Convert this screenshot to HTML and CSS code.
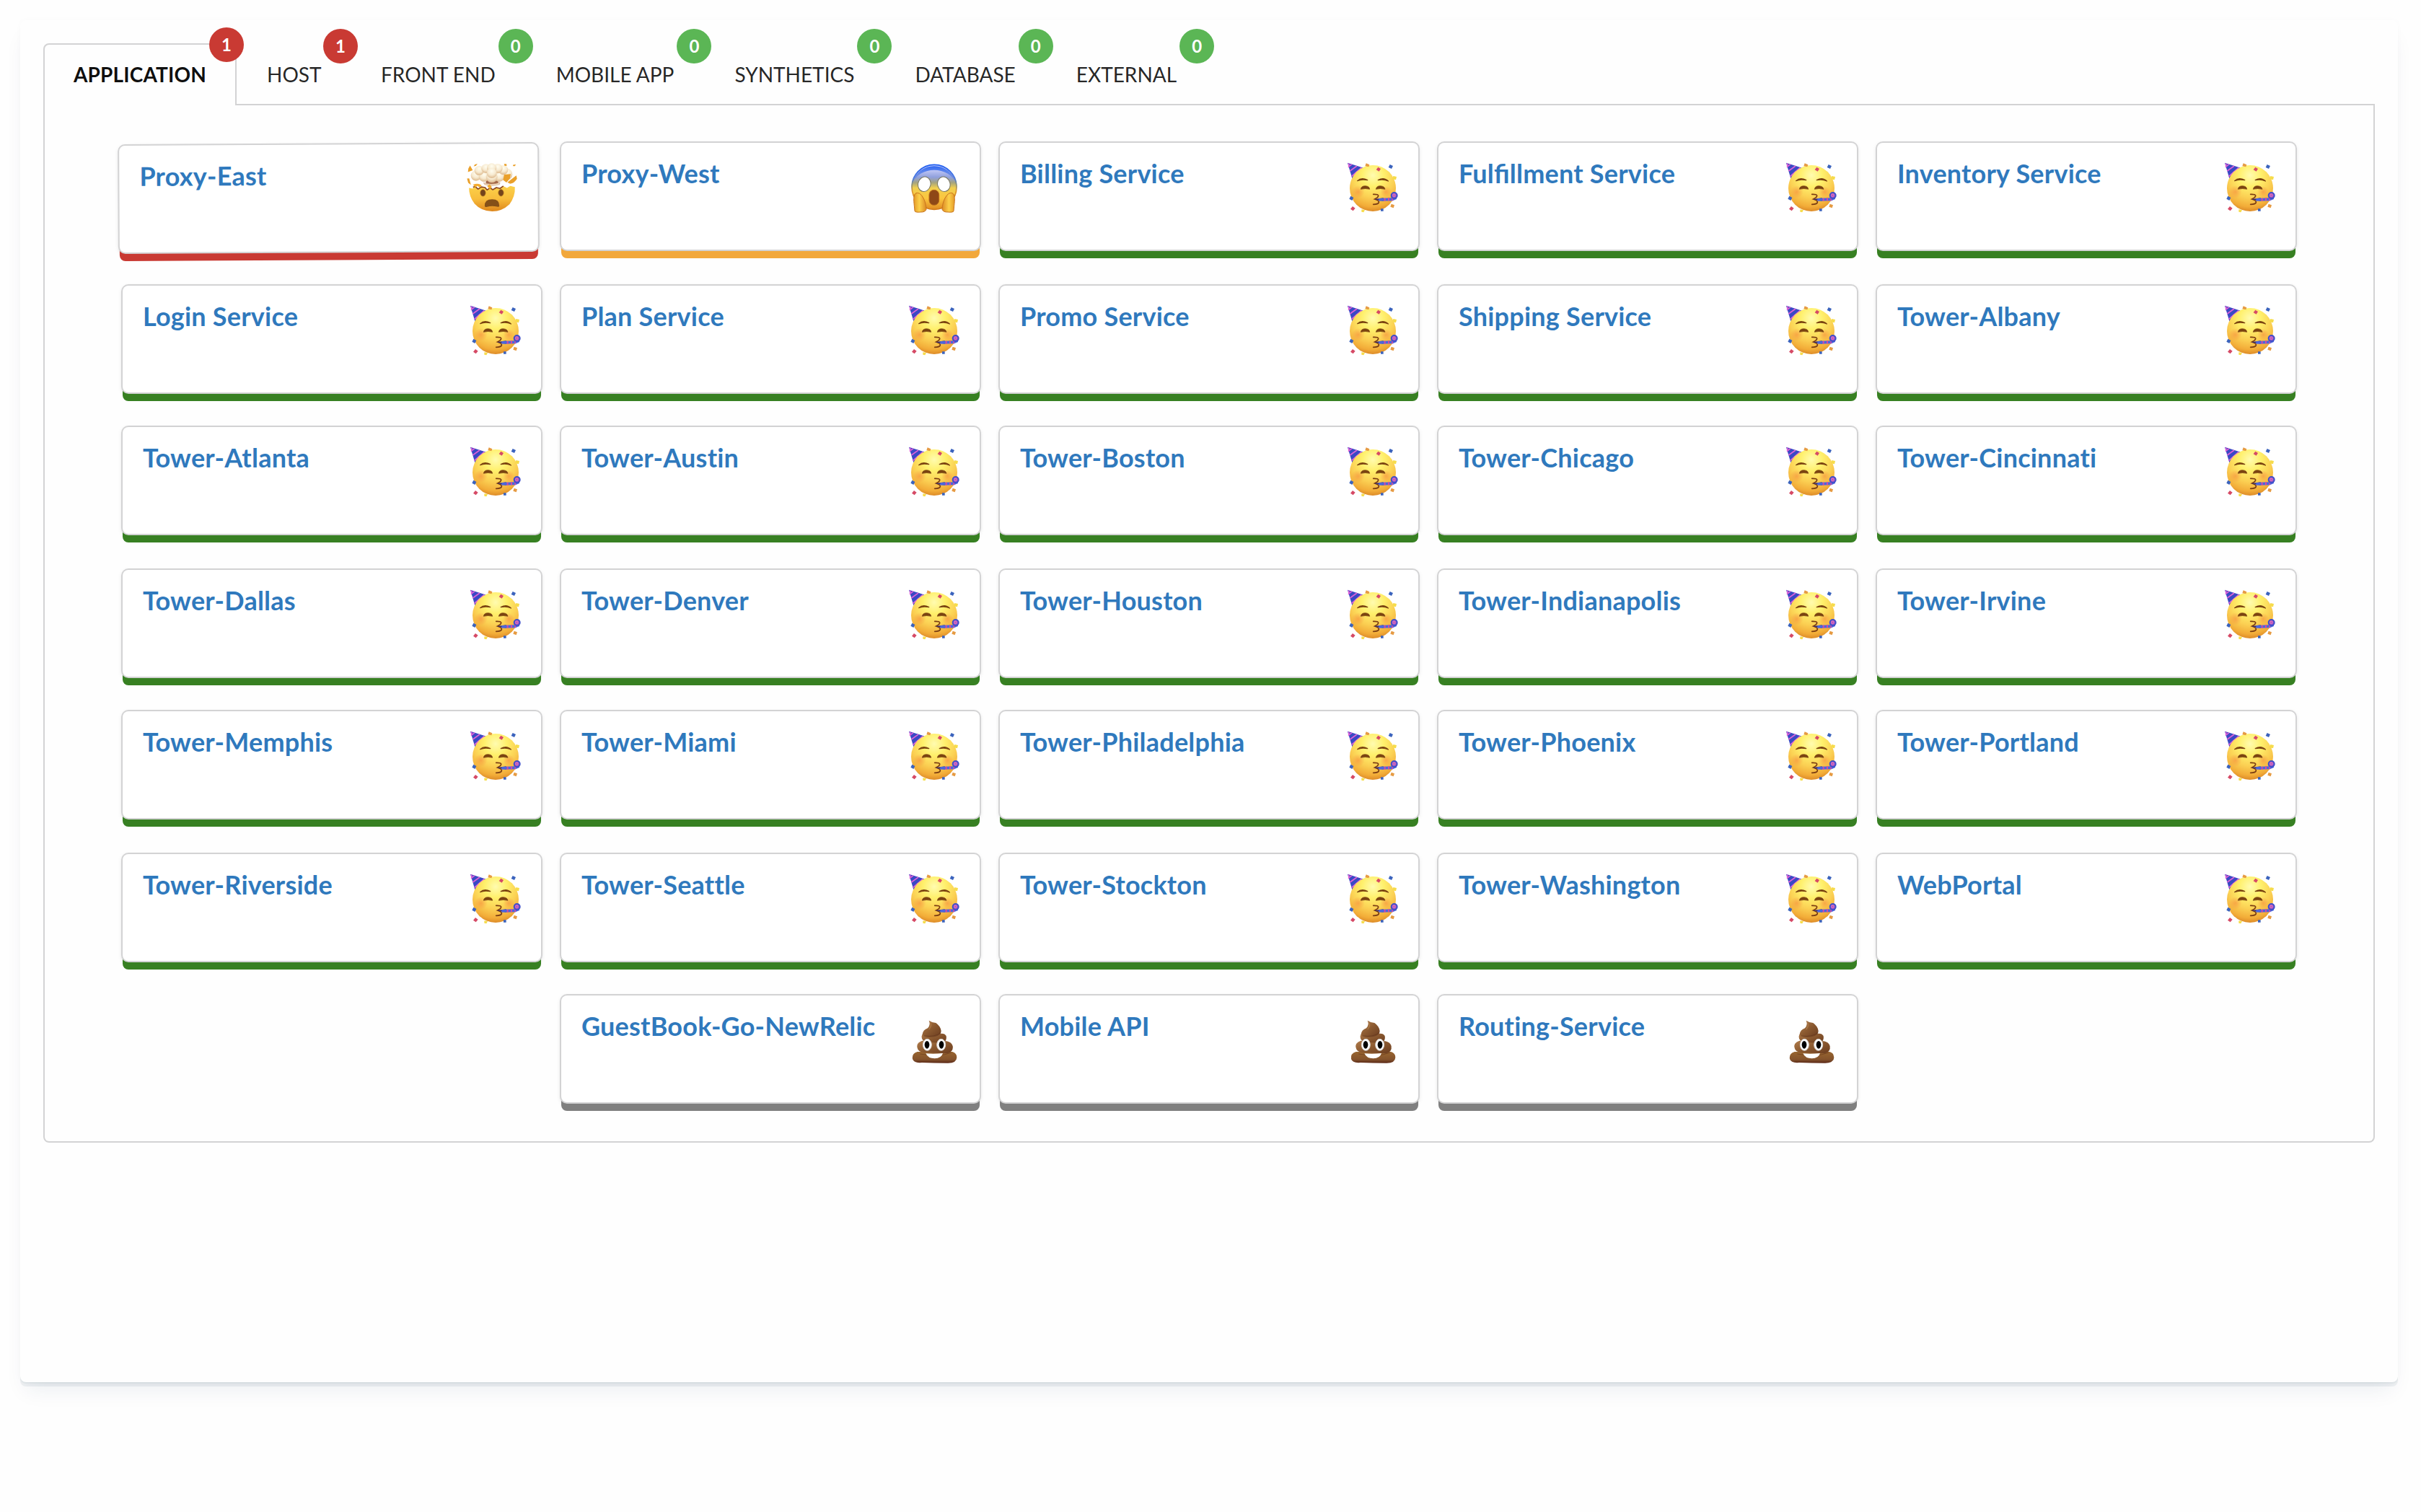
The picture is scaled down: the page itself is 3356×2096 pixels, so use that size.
FILE: index.html
```html
<!DOCTYPE html>
<html lang="en">
<head>
<meta charset="utf-8">
<title>Service Health</title>
<link rel="stylesheet" href="styles.css">
</head>
<body>
<svg class="defs" width="0" height="0" aria-hidden="true">
  <defs>
    <radialGradient id="face" cx=".5" cy=".22" r=".8">
      <stop offset="0" stop-color="#fffbb0"/><stop offset=".3" stop-color="#fff06c"/><stop offset=".6" stop-color="#fbd053"/><stop offset=".85" stop-color="#f2ac38"/><stop offset="1" stop-color="#d98525"/>
    </radialGradient>
    <linearGradient id="half" x1="0" y1="0" x2="0" y2="1">
      <stop offset="0" stop-color="#fbd14a"/><stop offset=".5" stop-color="#f8bd3c"/><stop offset="1" stop-color="#dd861c"/>
    </linearGradient>
    <linearGradient id="fear" x1="0" y1="0" x2="0" y2="1">
      <stop offset="0" stop-color="#c3cdfa"/><stop offset=".12" stop-color="#bfc6f5"/><stop offset=".28" stop-color="#90a0dc"/><stop offset=".4" stop-color="#a5a47f"/><stop offset=".52" stop-color="#f0cf50"/><stop offset=".75" stop-color="#fbc63e"/><stop offset="1" stop-color="#e08b22"/>
    </linearGradient>
    <linearGradient id="rim" x1="0" y1="0" x2="0" y2="1">
      <stop offset="0" stop-color="#1c5cf2"/><stop offset=".3" stop-color="#4a78dd"/><stop offset=".45" stop-color="#8a8f70"/><stop offset=".6" stop-color="#dd9528"/><stop offset="1" stop-color="#d27c1b"/>
    </linearGradient>
    <linearGradient id="brow" x1="0" y1="0" x2="0" y2="1">
      <stop offset="0" stop-color="#1c5cf2" stop-opacity=".9"/><stop offset="1" stop-color="#5f83dd" stop-opacity=".3"/>
    </linearGradient>
    <linearGradient id="hand" x1="0" y1="0" x2="1" y2="0">
      <stop offset="0" stop-color="#e39a28"/><stop offset=".45" stop-color="#fcd04a"/><stop offset="1" stop-color="#dc8a24"/>
    </linearGradient>
    <radialGradient id="puff" cx=".5" cy=".3" r=".7">
      <stop offset="0" stop-color="#fffdf0"/><stop offset=".55" stop-color="#f7ead0"/><stop offset="1" stop-color="#dcb88c"/>
    </radialGradient>
    <linearGradient id="coil" x1="0" y1="0" x2="1" y2="1">
      <stop offset="0" stop-color="#b07c4b"/><stop offset=".5" stop-color="#8a5930"/><stop offset="1" stop-color="#6b3c1f"/>
    </linearGradient>
    <linearGradient id="coilbase" x1="0" y1="0" x2="0" y2="1">
      <stop offset="0" stop-color="#98652f"/><stop offset=".7" stop-color="#83522c"/><stop offset="1" stop-color="#5a2816"/>
    </linearGradient>
    <radialGradient id="blush"><stop offset="0" stop-color="#f58a3c" stop-opacity=".6"/><stop offset="1" stop-color="#f58a3c" stop-opacity="0"/></radialGradient>

    <symbol id="party" viewBox="51 72 216 216" overflow="visible">
      <path d="M54 77 L120 98 Q86 110 74 145 Z" fill="#3a49c4"/>
      <path d="M59 79 L59 93 L72 83 M64 111 L93 90 M70 134 L112 97" stroke="#dd62d6" stroke-width="5" fill="none"/>
      <circle cx="159" cy="183" r="96" fill="url(#face)"/>
      <circle cx="98" cy="198" r="27" fill="url(#blush)"/><circle cx="214" cy="198" r="24" fill="url(#blush)"/>
      <path d="M95 152 Q112 136 137 149 Q112 144 95 152Z M181 149 Q205 135 223 153 Q205 144 181 149Z" fill="#7a4310" stroke="#7a4310" stroke-width="4" stroke-linejoin="round"/>
      <path d="M109 187 Q110 173 128 173 Q145 174 146 187 Q128 182 109 187Z M172 187 Q174 173 190 173 Q208 174 210 187 Q190 182 172 187Z" fill="#7a4310" stroke="#7a4310" stroke-width="2"/>
      <path d="M161 208 Q184 207 182 215 Q180 222 167 228 Q186 234 184 242 Q181 250 161 250" fill="none" stroke="#7a3c11" stroke-width="5" stroke-linecap="round"/>
      <path d="M165 229 L203 223 V236 Z" fill="#2b2a83"/><path d="M184 225 L240 223 L258 211 L258 228 L242 235 L184 236Z" fill="#4c66dc"/>
      <path d="M206 224 h6 v12 h-6z M222 223 h6 v12 h-6z M238 222 l5 -1 v14 h-5z" fill="#d24aa5"/>
      <circle cx="248" cy="213" r="12" fill="#9d55c6" stroke="#3f4fc9" stroke-width="6"/><circle cx="247" cy="212" r="5" fill="none" stroke="#e06db8" stroke-width="4"/>
      <path d="M181 95 l11 7 -7 11 -12 -7z M75 258 l11 8 -9 11 -11 -8z" fill="#d64a66"/>
      <path d="M230 84 l13 6 -6 12 -13 -6z M67 215 l12 7 -6 12 -12 -7z M192 268 h11 v10 h-11z" fill="#3b63bd"/>
      <path d="M131 79 l14 6 -3 9 -15 -3z M236 248 l13 5 -4 12 -13 -5z" fill="#e69b43"/>
      <path d="M244 132 l14 3 -3 13 -14 -3z M112 271 l14 2 -5 10 -9 -2z" fill="#f6dc4b"/>
    </symbol>

    <symbol id="scream" viewBox="27 42 216 216" overflow="visible">
      <circle cx="135" cy="148" r="93" fill="url(#fear)" stroke="url(#rim)" stroke-width="5"/>
      <path d="M45 130 A93 93 0 0 1 225 130 A96 81 0 0 0 45 130Z" fill="url(#brow)"/>
      <ellipse cx="94" cy="136" rx="26" ry="31" fill="#fff" stroke="#77765f" stroke-width="3" transform="rotate(14 94 136)"/>
      <ellipse cx="175" cy="136" rx="26" ry="31" fill="#fff" stroke="#77765f" stroke-width="3" transform="rotate(-14 175 136)"/>
      <rect x="114" y="160" width="41" height="63" rx="20" fill="#8e4817" stroke="#b8691b" stroke-width="3"/>
      <path id="palm" d="M54 248 C52 218 47 197 53 180 C60 166 77 173 85 186 C97 203 101 222 102 241 Q97 253 78 252 Q57 254 54 248Z" fill="url(#hand)" stroke="#c8731e" stroke-width="3"/>
      <use href="#palm" transform="translate(270 0) scale(-1 1)"/>
    </symbol>

    <symbol id="mindblown" viewBox="50 48 216 216" overflow="visible">
      <path d="M61 153 L76 156 L84 147 L99 160 L112 151 L128 154 L136 164 L149 155 L160 163 L175 154 L190 158 L205 147 L219 154 L233 146 L252 150 Q254 188 229 222 Q198 251 157 251 Q112 250 84 219 Q61 190 61 153Z" fill="url(#half)"/>
      <path d="M78 150 L86 147 L99 158 L112 149 L128 152 L136 162 L149 153 L160 161 L175 152 L190 156 L204 146" fill="none" stroke="#8c461b" stroke-width="5" stroke-linejoin="round"/>
      <path d="M133 112 H181 L184 137 H131Z" fill="#a4684a"/>
      <path d="M122 132 Q156 143 190 131 L188 139 Q156 149 126 139Z" fill="#f3dfc4" stroke="#b98258" stroke-width="1.5"/>
      <path d="M78 140 Q98 131 114 143 L106 151 L96 145 L87 151Z M137 147 l10 -9 9 12 -8 8z" fill="#f4ab2f"/>
      <g fill="url(#puff)">
        <circle cx="91" cy="102" r="22"/><circle cx="218" cy="97" r="24"/><circle cx="187" cy="106" r="22"/><circle cx="124" cy="106" r="22"/><circle cx="156" cy="108" r="24"/><circle cx="104" cy="81" r="20"/><circle cx="204" cy="79" r="20"/><circle cx="132" cy="73" r="19"/><circle cx="181" cy="73" r="20"/><circle cx="156" cy="71" r="20"/><circle cx="156" cy="92" r="21"/>
      </g>
      <path d="M208 98 L235 96 L231 116 L217 131 L203 121Z M258 102 L261 116 Q251 134 232 137 L221 131Z M66 60 L77 80 L57 87 L59 72Z M53 114 L62 113 L69 140 L58 132Z M86 56 l11 -3 -7 9 -9 1z M207 54 l10 0 2 8 -9 0z M244 59 l12 -3 -3 7 -8 0z" fill="#eaa02a"/>
      <ellipse cx="119" cy="174" rx="11" ry="14" fill="#74441c" stroke="#b57a20" stroke-width="2"/>
      <ellipse cx="194" cy="174" rx="11" ry="14" fill="#74441c" stroke="#b57a20" stroke-width="2"/>
      <path d="M126 229 Q125 201 157 201 Q188 201 187 229 Q186 234 178 232 Q157 226 136 232 Q127 234 126 229Z" fill="#845018"/>
    </symbol>

    <symbol id="poop" viewBox="27 18 216 216" overflow="visible">
      <path d="M65 174 Q41 181 45 204 Q50 222 84 219 Q132 221 190 221 Q228 222 229 197 Q229 180 211 174Z" fill="url(#coilbase)"/>
      <path d="M85 128 Q59 137 65 158 Q68 174 91 177 L190 181 Q216 174 212 150 Q207 134 187 130Z" fill="url(#coil)"/>
      <path d="M96 94 Q79 101 84 119 Q88 136 130 136 L172 137 Q189 127 185 108 Q179 97 164 98Z" fill="url(#coil)"/>
      <path d="M113 44 Q121 62 108 76 Q88 83 86 102 Q101 118 137 112 Q164 106 164 88 Q162 68 142 54 Q124 52 113 44Z" fill="url(#coil)"/>
      <path d="M91 108 Q140 114 162 94 M76 183 Q154 197 206 178" fill="none" stroke="#5b3018" stroke-width="3" opacity=".5"/>
      <path d="M118 52 Q127 64 113 81" fill="none" stroke="#b88654" stroke-width="5" opacity=".6"/>
      <ellipse cx="106" cy="145" rx="18" ry="24" fill="#fff" stroke="#d6d3cf" stroke-width="3"/>
      <ellipse cx="164" cy="145" rx="18" ry="24" fill="#fff" stroke="#d6d3cf" stroke-width="3"/>
      <ellipse cx="105" cy="145" rx="10" ry="16"/><ellipse cx="165" cy="145" rx="10" ry="16"/>
      <path d="M100 181 Q135 184 171 180 Q165 201 137 202 Q109 202 100 181Z" fill="#fff"/>
    </symbol>
  </defs>
</svg>

<main class="widget">
  <nav class="tabs">
    <a class="tab active">APPLICATION<span class="badge red">1</span></a>
    <a class="tab host">HOST<span class="badge red">1</span></a>
    <a class="tab">FRONT END<span class="badge">0</span></a>
    <a class="tab">MOBILE APP<span class="badge">0</span></a>
    <a class="tab">SYNTHETICS<span class="badge">0</span></a>
    <a class="tab">DATABASE<span class="badge">0</span></a>
    <a class="tab">EXTERNAL<span class="badge">0</span></a>
  </nav>
  <section class="panel">
    <article class="card critical shaking"><h2>Proxy-East</h2><svg class="mood"><use href="#mindblown"/></svg></article>
    <article class="card warning"><h2>Proxy-West</h2><svg class="mood"><use href="#scream"/></svg></article>
    <article class="card"><h2>Billing Service</h2><svg class="mood"><use href="#party"/></svg></article>
    <article class="card"><h2 class="ligatures">Fulfillment Service</h2><svg class="mood"><use href="#party"/></svg></article>
    <article class="card"><h2>Inventory Service</h2><svg class="mood"><use href="#party"/></svg></article>
    <article class="card"><h2>Login Service</h2><svg class="mood"><use href="#party"/></svg></article>
    <article class="card"><h2>Plan Service</h2><svg class="mood"><use href="#party"/></svg></article>
    <article class="card"><h2>Promo Service</h2><svg class="mood"><use href="#party"/></svg></article>
    <article class="card"><h2>Shipping Service</h2><svg class="mood"><use href="#party"/></svg></article>
    <article class="card"><h2>Tower-Albany</h2><svg class="mood"><use href="#party"/></svg></article>
    <article class="card"><h2>Tower-Atlanta</h2><svg class="mood"><use href="#party"/></svg></article>
    <article class="card"><h2>Tower-Austin</h2><svg class="mood"><use href="#party"/></svg></article>
    <article class="card"><h2>Tower-Boston</h2><svg class="mood"><use href="#party"/></svg></article>
    <article class="card"><h2>Tower-Chicago</h2><svg class="mood"><use href="#party"/></svg></article>
    <article class="card"><h2>Tower-Cincinnati</h2><svg class="mood"><use href="#party"/></svg></article>
    <article class="card"><h2>Tower-Dallas</h2><svg class="mood"><use href="#party"/></svg></article>
    <article class="card"><h2>Tower-Denver</h2><svg class="mood"><use href="#party"/></svg></article>
    <article class="card"><h2>Tower-Houston</h2><svg class="mood"><use href="#party"/></svg></article>
    <article class="card"><h2>Tower-Indianapolis</h2><svg class="mood"><use href="#party"/></svg></article>
    <article class="card"><h2>Tower-Irvine</h2><svg class="mood"><use href="#party"/></svg></article>
    <article class="card"><h2>Tower-Memphis</h2><svg class="mood"><use href="#party"/></svg></article>
    <article class="card"><h2>Tower-Miami</h2><svg class="mood"><use href="#party"/></svg></article>
    <article class="card"><h2>Tower-Philadelphia</h2><svg class="mood"><use href="#party"/></svg></article>
    <article class="card"><h2>Tower-Phoenix</h2><svg class="mood"><use href="#party"/></svg></article>
    <article class="card"><h2>Tower-Portland</h2><svg class="mood"><use href="#party"/></svg></article>
    <article class="card"><h2>Tower-Riverside</h2><svg class="mood"><use href="#party"/></svg></article>
    <article class="card"><h2>Tower-Seattle</h2><svg class="mood"><use href="#party"/></svg></article>
    <article class="card"><h2>Tower-Stockton</h2><svg class="mood"><use href="#party"/></svg></article>
    <article class="card"><h2>Tower-Washington</h2><svg class="mood"><use href="#party"/></svg></article>
    <article class="card"><h2>WebPortal</h2><svg class="mood"><use href="#party"/></svg></article>
    <article class="card idle first-idle"><h2>GuestBook-Go-NewRelic</h2><svg class="mood"><use href="#poop"/></svg></article>
    <article class="card idle"><h2>Mobile API</h2><svg class="mood"><use href="#poop"/></svg></article>
    <article class="card idle"><h2>Routing-Service</h2><svg class="mood"><use href="#poop"/></svg></article>
  </section>
</main>
</body>
</html>
```
FILE: styles.css
```css
* {
  box-sizing: border-box;
}

body {
  margin: 0;
  padding: 28px 32px 0 28px;
  height: 2096px;
  overflow: hidden;
  background: #fefefe;
  font-family: Lato, "Liberation Sans", sans-serif;
}

.defs {
  position: absolute;
}

.widget {
  height: 1888px;
  padding: 32px 32px 0;
  border-radius: 8px;
  background: #fefefe;
  box-shadow:
    0 2px 0 rgba(0, 70, 70, 0.04),
    0 6px 0 rgba(0, 40, 60, 0.06),
    0 0 10px rgba(0, 70, 60, 0.02),
    0 18px 28px -8px rgba(0, 45, 95, 0.08);
}

.tabs {
  display: flex;
  height: 86px;
  border-bottom: 2px solid #d3d3d4;
}

.tab {
  position: relative;
  display: flex;
  flex: none;
  align-items: center;
  height: 86px;
  padding: 0 40px 2px;
  border: 2px solid transparent;
  border-bottom: 0;
  font-size: 28px;
  line-height: 34px;
  white-space: nowrap;
  color: rgba(0, 0, 0, 0.87);
}

.tab.active {
  width: 268px;
  border-color: #d3d3d4;
  border-radius: 8px 8px 0 0;
  background: #fefefe;
  font-weight: 700;
  letter-spacing: 0.15px;
  color: rgba(0, 0, 0, 0.95);
}

.tab.host {
  width: 158px;
}

.badge {
  position: absolute;
  top: -22px;
  right: -12px;
  width: 48px;
  height: 48px;
  border-radius: 50%;
  background: #5bb655;
  color: #fff;
  font-size: 24px;
  font-weight: 700;
  line-height: 47px;
  letter-spacing: 0;
  text-align: center;
}

/* the badge is offset from the inside of the tab's 2px border */
.tab .badge {
  right: -12px;
}

.tab.active .badge {
  top: -24px;
}

.badge.red {
  background: #c93a33;
}

.panel {
  display: grid;
  grid-template-columns: repeat(5, 580px);
  grid-template-rows: 198px 196px 198px 196px 198px 196px 150px;
  column-gap: 28px;
  justify-content: center;
  align-items: start;
  height: 1438px;
  padding-top: 52px;
  border: 2px solid #d3d3d4;
  border-top: 0;
  border-radius: 0 0 8px 8px;
}

.card {
  --status: #378022;
  display: flex;
  justify-content: space-between;
  height: 148px;
  padding: 20px 27px 0 28px;
  border-radius: 8px;
  background: #fff;
  box-shadow:
    0 0 0 2px #d3d3d4,
    0 12px 0 0 var(--status),
    0 2px 6px 0 #d4d4d5;
}

.card h2 {
  margin: 0;
  font-size: 36px;
  font-weight: 700;
  line-height: 44px;
  letter-spacing: 0.22px;
  white-space: nowrap;
  color: #2f79bd;
}

.card h2.ligatures {
  font-feature-settings: "liga" 1;
}

.mood {
  flex: none;
  width: 72px;
  height: 72px;
  margin-top: 6px;
  overflow: visible;
}

.critical {
  --status: #c93a33;
}

.warning {
  --status: #f2a83b;
}

.idle {
  --status: #808080;
}

.first-idle {
  grid-column-start: 2;
}

.shaking {
  transform: translate(-4.5px, 2.5px) rotate(-0.3deg);
}
```
